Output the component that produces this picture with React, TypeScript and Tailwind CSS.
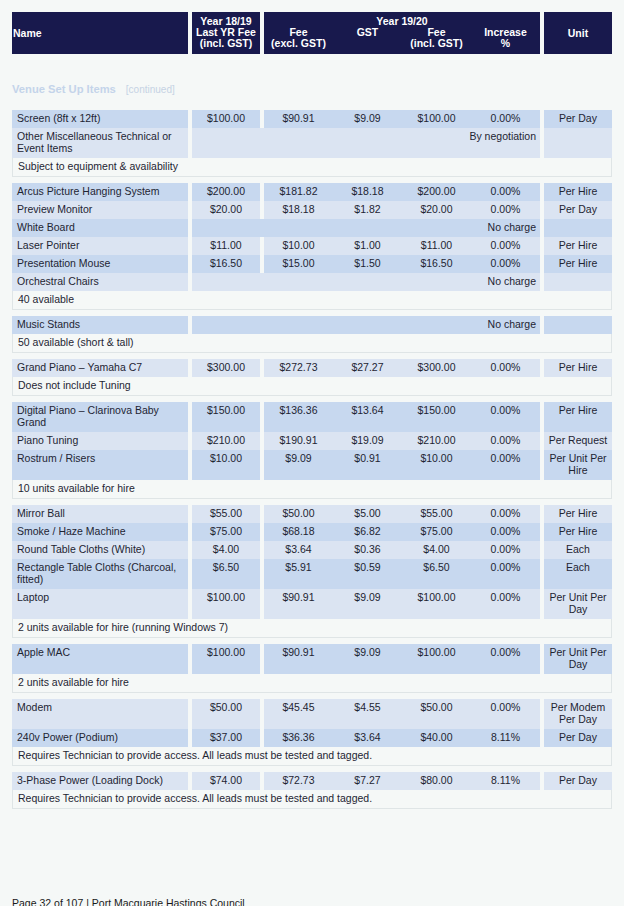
type Row = {
  name: string
  dark?: boolean
  last?: string
  fee?: string
  gst?: string
  incl?: string
  inc?: string
  unit?: string
  merged?: string
}

type Group = { rows: Row[]; note: string }

const groups: Group[] = [
  {
    rows: [
      { name: "Screen (8ft x 12ft)", dark: true, last: "$100.00", fee: "$90.91", gst: "$9.09", incl: "$100.00", inc: "0.00%", unit: "Per Day" },
      { name: "Other Miscellaneous Technical or Event Items", merged: "By negotiation" },
    ],
    note: "Subject to equipment & availability",
  },
  {
    rows: [
      { name: "Arcus Picture Hanging System", dark: true, last: "$200.00", fee: "$181.82", gst: "$18.18", incl: "$200.00", inc: "0.00%", unit: "Per Hire" },
      { name: "Preview Monitor", last: "$20.00", fee: "$18.18", gst: "$1.82", incl: "$20.00", inc: "0.00%", unit: "Per Day" },
      { name: "White Board", dark: true, merged: "No charge" },
      { name: "Laser Pointer", last: "$11.00", fee: "$10.00", gst: "$1.00", incl: "$11.00", inc: "0.00%", unit: "Per Hire" },
      { name: "Presentation Mouse", dark: true, last: "$16.50", fee: "$15.00", gst: "$1.50", incl: "$16.50", inc: "0.00%", unit: "Per Hire" },
      { name: "Orchestral Chairs", merged: "No charge" },
    ],
    note: "40 available",
  },
  {
    rows: [{ name: "Music Stands", dark: true, merged: "No charge" }],
    note: "50 available (short & tall)",
  },
  {
    rows: [
      { name: "Grand Piano – Yamaha C7", last: "$300.00", fee: "$272.73", gst: "$27.27", incl: "$300.00", inc: "0.00%", unit: "Per Hire" },
    ],
    note: "Does not include Tuning",
  },
  {
    rows: [
      { name: "Digital Piano – Clarinova Baby Grand", dark: true, last: "$150.00", fee: "$136.36", gst: "$13.64", incl: "$150.00", inc: "0.00%", unit: "Per Hire" },
      { name: "Piano Tuning", last: "$210.00", fee: "$190.91", gst: "$19.09", incl: "$210.00", inc: "0.00%", unit: "Per Request" },
      { name: "Rostrum / Risers", dark: true, last: "$10.00", fee: "$9.09", gst: "$0.91", incl: "$10.00", inc: "0.00%", unit: "Per Unit Per Hire" },
    ],
    note: "10 units available for hire",
  },
  {
    rows: [
      { name: "Mirror Ball", last: "$55.00", fee: "$50.00", gst: "$5.00", incl: "$55.00", inc: "0.00%", unit: "Per Hire" },
      { name: "Smoke / Haze Machine", dark: true, last: "$75.00", fee: "$68.18", gst: "$6.82", incl: "$75.00", inc: "0.00%", unit: "Per Hire" },
      { name: "Round Table Cloths (White)", last: "$4.00", fee: "$3.64", gst: "$0.36", incl: "$4.00", inc: "0.00%", unit: "Each" },
      { name: "Rectangle Table Cloths (Charcoal, fitted)", dark: true, last: "$6.50", fee: "$5.91", gst: "$0.59", incl: "$6.50", inc: "0.00%", unit: "Each" },
      { name: "Laptop", last: "$100.00", fee: "$90.91", gst: "$9.09", incl: "$100.00", inc: "0.00%", unit: "Per Unit Per Day" },
    ],
    note: "2 units available for hire (running Windows 7)",
  },
  {
    rows: [
      { name: "Apple MAC", dark: true, last: "$100.00", fee: "$90.91", gst: "$9.09", incl: "$100.00", inc: "0.00%", unit: "Per Unit Per Day" },
    ],
    note: "2 units available for hire",
  },
  {
    rows: [
      { name: "Modem", last: "$50.00", fee: "$45.45", gst: "$4.55", incl: "$50.00", inc: "0.00%", unit: "Per Modem Per Day" },
      { name: "240v Power (Podium)", dark: true, last: "$37.00", fee: "$36.36", gst: "$3.64", incl: "$40.00", inc: "8.11%", unit: "Per Day" },
    ],
    note: "Requires Technician to provide access. All leads must be tested and tagged.",
  },
  {
    rows: [
      { name: "3-Phase Power (Loading Dock)", last: "$74.00", fee: "$72.73", gst: "$7.27", incl: "$80.00", inc: "8.11%", unit: "Per Day" },
    ],
    note: "Requires Technician to provide access. All leads must be tested and tagged.",
  },
]

function PriceRow({ row }: { row: Row }) {
  const bg = row.dark ? "bg-[#c7d8ef]" : "bg-[#dbe4f2]"
  return (
    <div className="grid grid-cols-[176px_68px_276px_68px] gap-x-[4px] leading-[12px]">
      <div className={`${bg} pl-[5px] pr-[6px] pt-[2px] pb-[4px]`}>{row.name}</div>
      {row.merged ? (
        <div className={`${bg} col-span-2 text-right pr-[4px] pt-[2px] pb-[4px]`}>{row.merged}</div>
      ) : (
        <>
          <div className={`${bg} text-center pt-[2px] pb-[4px]`}>{row.last}</div>
          <div className={`${bg} grid grid-cols-4 text-center pt-[2px] pb-[4px]`}>
            <div>{row.fee}</div>
            <div>{row.gst}</div>
            <div>{row.incl}</div>
            <div>{row.inc}</div>
          </div>
        </>
      )}
      <div className={`${bg} text-center px-[2px] pt-[2px] pb-[4px]`}>{row.unit}</div>
    </div>
  )
}

export default function App() {
  return (
    <div className="w-[624px] h-[906px] overflow-hidden bg-[#f5f8f7] px-[12px] pt-[12px] font-['Liberation_Sans',Arial,sans-serif] text-[10.5px] text-[#1e2533]">
      {/* table header */}
      <div className="grid grid-cols-[176px_68px_276px_68px] gap-x-[4px] h-[42px] text-white font-bold leading-[11px]">
        <div className="bg-[#18194d] flex items-center pl-[1px]">Name</div>
        <div className="bg-[#18194d] flex flex-col items-center pt-[4px] text-center">
          <span>Year 18/19</span>
          <span>Last YR Fee</span>
          <span>(incl. GST)</span>
        </div>
        <div className="bg-[#18194d] flex flex-col pt-[4px]">
          <div className="text-center">Year 19/20</div>
          <div className="grid grid-cols-4 text-center">
            <div>
              Fee
              <br />
              (excl. GST)
            </div>
            <div>GST</div>
            <div>
              Fee
              <br />
              (incl. GST)
            </div>
            <div>
              Increase
              <br />%
            </div>
          </div>
        </div>
        <div className="bg-[#18194d] flex items-center justify-center">Unit</div>
      </div>

      {/* section title */}
      <div className="mt-[29px] flex items-baseline gap-[10px] leading-[13px]">
        <span className="text-[11.2px] font-bold text-[#c4d4ea]">Venue Set Up Items</span>
        <span className="text-[10px] text-[#c6d3e4]">[continued]</span>
      </div>

      <div className="mt-[14px] flex flex-col gap-[6px]">
        {groups.map((g, i) => (
          <div key={i} className="flex flex-col">
            {g.rows.map((r, j) => (
              <PriceRow key={j} row={r} />
            ))}
            <div className="border-x border-b border-[#dfe5e6] pl-[5px] pt-[2px] pb-[4px] leading-[12px]">{g.note}</div>
          </div>
        ))}
      </div>

      <div className="mt-[88px] leading-[12px] text-[#1a1a1a]">Page 32 of 107 | Port Macquarie Hastings Council</div>
    </div>
  )
}
